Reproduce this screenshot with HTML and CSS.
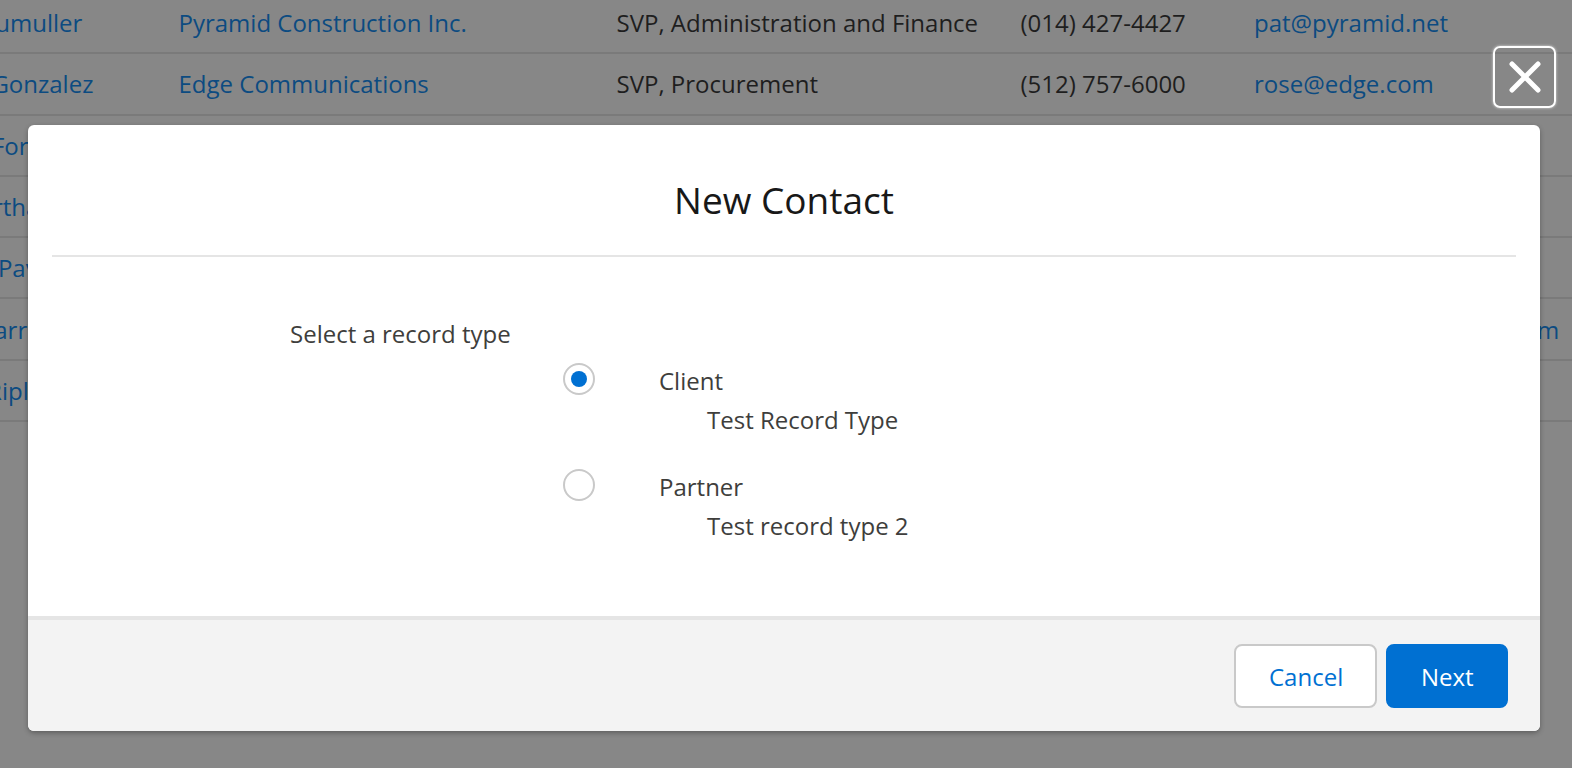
FILE: index.html
```html
<!DOCTYPE html>
<html lang="en">
<head>
<meta charset="utf-8">
<title>New Contact</title>
<link rel="stylesheet" href="styles.css">
</head>
<body>
<div class="list">
  <div class="row"><span class="c name">Pat Stumuller</span><span class="c link">Pyramid Construction Inc.</span><span class="c txt">SVP, Administration and Finance</span><span class="c txt">(014) 427-4427</span><span class="c link">pat@pyramid.net</span></div>
  <div class="row"><span class="c name">Rose Gonzalez</span><span class="c link">Edge Communications</span><span class="c txt">SVP, Procurement</span><span class="c txt">(512) 757-6000</span><span class="c link">rose@edge.com</span></div>
  <div class="row"><span class="c name">Sean Forbes</span><span class="c link">Edge Communications</span><span class="c txt">CFO</span><span class="c txt">(512) 757-6000</span><span class="c link">sean@edge.com</span></div>
  <div class="row"><span class="c name">Siddartha Nedaerk</span><span class="c link"></span><span class="c txt"></span><span class="c txt"></span><span class="c link"></span></div>
  <div class="row"><span class="c name">Stella Pavlova</span><span class="c link">United Oil &amp; Gas Corp.</span><span class="c txt">SVP, Production</span><span class="c txt">(212) 842-5500</span><span class="c link">spavlova@uog.com</span></div>
  <div class="row"><span class="c name">Tim Barr</span><span class="c link">Grand Hotels &amp; Resorts Ltd</span><span class="c txt">SVP, Administration and Finance</span><span class="c txt">(312) 596-1000</span><span class="c link">barr_tim@grandhotels.com</span></div>
  <div class="row"><span class="c name">Tom Ripley</span><span class="c link">United Oil &amp; Gas, UK</span><span class="c txt">Regional General Manager</span><span class="c txt">(650) 450-8810</span><span class="c link">tripley@uog.com</span></div>
</div>

<button class="close" type="button" aria-label="Close">
  <svg width="32" height="32" viewBox="0 0 32 32"><path d="M3 3 L29 29 M29 3 L3 29" stroke="#fff" stroke-width="5" stroke-linecap="round" fill="none"/></svg>
</button>

<div class="modal">
  <div class="header"><h2 class="title">New Contact</h2></div>
  <div class="content">
    <div class="legend">Select a record type</div>
    <div class="options">
      <div class="option">
        <span class="radio checked"></span>
        <div class="otext">
          <div class="olabel">Client</div>
          <div class="odesc">Test Record Type</div>
        </div>
      </div>
      <div class="option">
        <span class="radio"></span>
        <div class="otext">
          <div class="olabel">Partner</div>
          <div class="odesc">Test record type 2</div>
        </div>
      </div>
    </div>
  </div>
  <div class="footer">
    <button class="btn neutral" type="button">Cancel</button>
    <button class="btn brand" type="button">Next</button>
  </div>
</div>
</body>
</html>
```

FILE: styles.css
```css
html, body {
  margin: 0;
  padding: 0;
}
body {
  width: 1572px;
  height: 768px;
  overflow: hidden;
  background: #878787;
  font-family: "Open Sans", "Noto Sans", sans-serif;
  font-size: 24px;
  position: relative;
}
.list {
  margin-top: -7px;
  margin-left: -69px;
  width: 1712px;
}
.row {
  display: grid;
  grid-template-columns: 247.5px 438px 404px 233.5px 1fr;
  align-items: center;
  height: 59.3px;
  border-bottom: 2px solid #7a7a7a;
  white-space: nowrap;
}
.c { display: block; overflow: visible; }
.name, .link { color: #0c4b81; }
.txt { color: #1e1e1e; }

.close {
  position: absolute;
  left: 1493px;
  top: 46px;
  width: 63px;
  height: 62px;
  box-sizing: border-box;
  border: 2px solid #fff;
  border-radius: 7px;
  background: transparent;
  box-shadow: 0 0 3px rgba(255,255,255,0.7);
  display: flex;
  align-items: center;
  justify-content: center;
  padding: 0;
}

.modal {
  position: absolute;
  left: 28px;
  top: 125px;
  width: 1512px;
  background: #fff;
  border-radius: 6px;
  overflow: hidden;
  box-shadow: 0 2px 5px rgba(0,0,0,0.3);
}
.header {
  margin: 0 24px;
  padding: 52px 0 32px;
  border-bottom: 2px solid #e5e5e5;
  text-align: center;
}
.title {
  margin: 0;
  font-size: 37px;
  font-weight: 400;
  line-height: 46px;
  color: #181818;
}
.content {
  padding: 59px 0 72px 262px;
  color: #3e3e3c;
  line-height: 36px;
}
.legend { height: 36px; }
.options {
  margin-top: 11px;
  margin-left: 273px;
  display: flex;
  flex-direction: column;
  gap: 31px;
}
.option {
  display: flex;
  align-items: flex-start;
  gap: 64px;
}
.radio {
  width: 32px;
  height: 32px;
  box-sizing: border-box;
  border: 2px solid #c9c9c9;
  border-radius: 50%;
  background: #fff;
  display: flex;
  align-items: center;
  justify-content: center;
  flex: none;
}
.radio.checked::after {
  content: "";
  width: 16px;
  height: 16px;
  border-radius: 50%;
  background: #0070d2;
}
.olabel { height: 36px; }
.odesc { height: 36px; padding-left: 48px; margin-top: 3px; }
.footer {
  border-top: 4px solid #e5e5e5;
  background: #f3f3f3;
  padding: 24px 32px 23px;
  display: flex;
  justify-content: flex-end;
  gap: 9px;
}
.btn {
  height: 64px;
  box-sizing: border-box;
  border-radius: 8px;
  font-family: "Open Sans", "Noto Sans", sans-serif;
  font-size: 24px;
  padding: 0 33px;
  cursor: pointer;
}
.neutral {
  width: 143px;
  background: #fff;
  border: 2px solid #c9c9c9;
  color: #0070d2;
}
.brand {
  width: 122px;
  background: #0070d2;
  border: 2px solid #0070d2;
  color: #fff;
}
```
